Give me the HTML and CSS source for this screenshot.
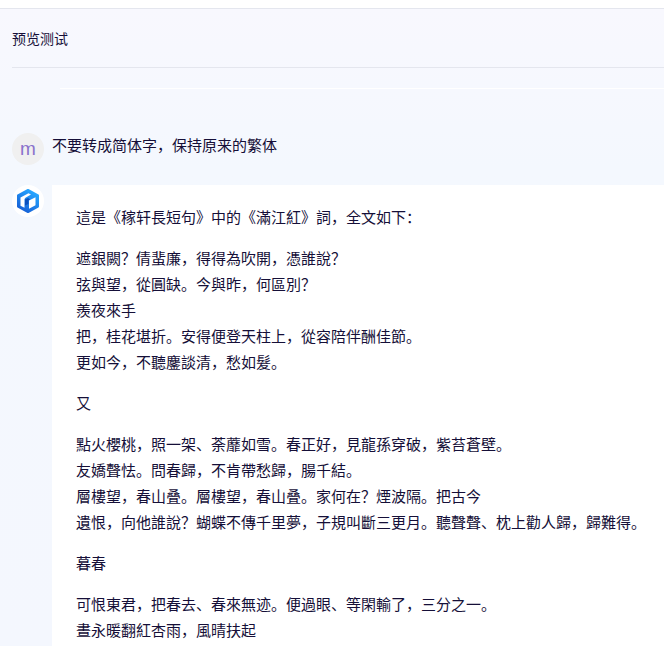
FILE: index.html
```html
<!DOCTYPE html>
<html lang="zh-CN">
<head>
<meta charset="utf-8">
<meta name="viewport" content="width=device-width, initial-scale=1">
<title>预览测试</title>
<link rel="stylesheet" href="styles.css">
</head>
<body>
<main class="panel">
  <header class="panel-header"><h1>预览测试</h1></header>
  <section class="chat">
    <article class="message">
      <div class="avatar avatar-user">m</div>
      <p class="question">不要转成简体字，保持原来的繁体</p>
    </article>
    <article class="message">
      <div class="avatar avatar-bot">
        <svg viewBox="0 0 24 26" width="24" height="26" aria-hidden="true">
          <defs><linearGradient id="logo" x1="0" y1="1" x2="0.6" y2="0"><stop offset="0" stop-color="#1557d0"/><stop offset="1" stop-color="#24a4ff"/></linearGradient></defs>
          <path fill="url(#logo)" stroke="url(#logo)" stroke-linejoin="round" stroke-width="2" d="M12 2 22 7.500V18.500L12 24 2 18.500V7.500Z"/>
          <path fill="#fff" d="M4.500 9.500 12.500 5.200 15 6.500 9.500 9.700 8.500 11V19.800L4.500 17.700Z"/>
          <path fill="#fff" d="M13 12.600 19.500 9.300V17.200L13 20.700Z"/>
          <path fill="#0c50bd" d="M9 11.500 12 10 14 11.300 12.500 12.500V16L9 17.500Z"/>
        </svg>
      </div>
      <div class="answer">
        <p>這是《稼轩長短句》中的《滿江紅》詞，全文如下：</p>
        <p>遮銀闕？倩蜚廉，得得為吹開，憑誰說？<br>弦與望，從圓缺。今與昨，何區別？<br>羨夜來手<br>把，桂花堪折。安得便登天柱上，從容陪伴酬佳節。<br>更如今，不聽鏖談清，愁如髮。</p>
        <p>又</p>
        <p>點火櫻桃，照一架、荼蘼如雪。春正好，見龍孫穿破，紫苔蒼壁。<br>友嬌聲怯。問春歸，不肯帶愁歸，腸千結。<br>層樓望，春山叠。層樓望，春山叠。家何在？煙波隔。把古今<br>遺恨，向他誰說？蝴蝶不傳千里夢，子規叫斷三更月。聽聲聲、枕上勸人歸，歸難得。</p>
        <p>暮春</p>
        <p>可恨東君，把春去、春來無迹。便過眼、等閑輸了，三分之一。<br>晝永暖翻紅杏雨，風晴扶起</p>
      </div>
    </article>
  </section>
</main>
</body>
</html>
```
FILE: styles.css
```css
* { box-sizing: border-box; }
body {
  margin: 0;
  padding-top: 8px;
  background: #fff;
  color: #150f38;
  font: 15px/26px "Noto Sans CJK SC", sans-serif;
}
p, h1 { margin: 0; }
.panel {
  height: calc(100vh - 8px);
  overflow: hidden;
  padding-left: 12px;
  border-top: 1px solid #e4e6ee;
  background: linear-gradient(#f8f8fe, #f4f8fe 25%, #f4f7fe);
}
.panel-header {
  padding: 16px 0;
  border-bottom: 1px solid #e4e6ee;
}
.panel-header h1 {
  font-size: 14px;
  font-weight: 400;
}
.chat {
  display: flex;
  flex-direction: column;
  gap: 20px;
  padding-top: 64px;
}
.chat::before {
  content: "";
  height: 1px;
  margin: -44px 0 24px 48px;
  background: #fff;
}
.message {
  display: flex;
  align-items: flex-start;
  gap: 8px;
}
.avatar {
  display: flex;
  flex: none;
  align-items: center;
  justify-content: center;
  width: 32px;
  height: 32px;
  border-radius: 50%;
}
.avatar-user {
  background: #f0f0f0;
  color: #8a72cc;
  font-family: "Liberation Sans", sans-serif;
  font-size: 19px;
}
.avatar-bot { background: #fff; }
.question { line-height: 24px; }
.answer {
  display: flex;
  flex: 1;
  flex-direction: column;
  gap: 15px;
  min-width: 0;
  padding: 19px 0 20px 24px;
  background: #fff;
}
```
